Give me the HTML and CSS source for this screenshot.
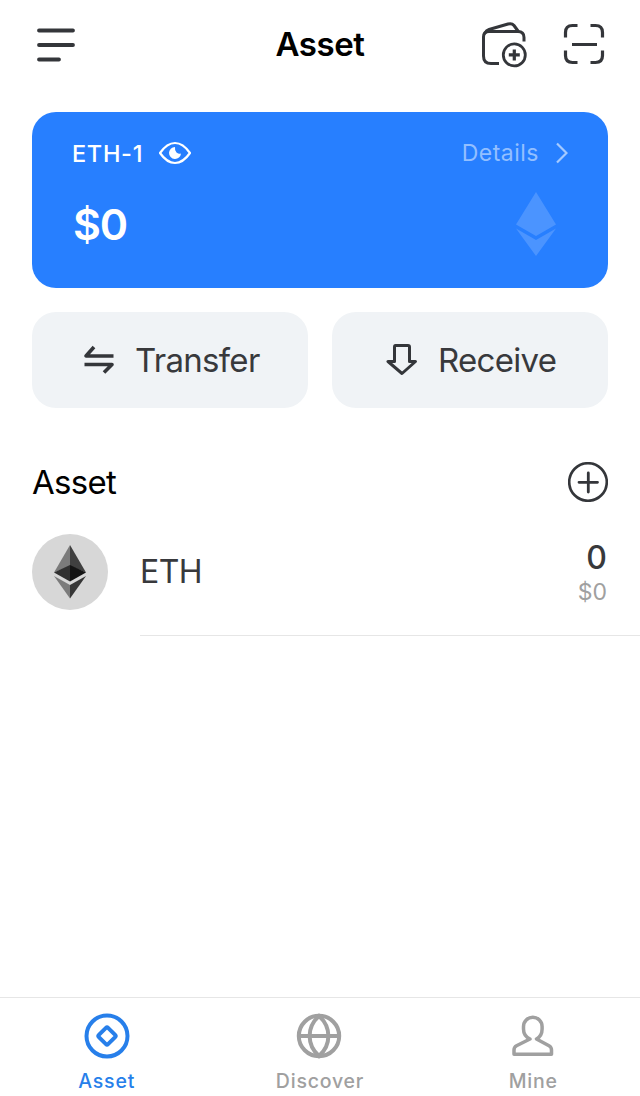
FILE: index.html
```
<!DOCTYPE html>
<html lang="en">
<head>
  <meta charset="UTF-8" />
  <meta name="viewport" content="width=device-width, initial-scale=1.0"/>
  <title>Asset</title>
  <link rel="stylesheet" href="styles.css">
</head>
<body>

  <header class="header">
    <svg class="icon menu-icon" width="40" height="40" viewBox="0 0 40 40">
      <path d="M3 5.500H37M3 20H37M3 34.500H23" stroke-width="3.800"/>
    </svg>
    <h1>Asset</h1>
    <div class="header-actions">
      <svg class="icon" width="48" height="48" viewBox="480 20 48 48">
        <path d="M499 63.500H491Q483.500 63.500 483.500 56V37Q483.500 31.500 489 31.500H518Q524 31.500 524 37.500V41.500" stroke-width="3" stroke-linecap="butt"/>
        <path d="M485 33Q486 30.500 489 29.500L508 24Q512 23 514 25.500L518 31" stroke-width="3"/>
        <circle cx="514.300" cy="54.900" r="11" stroke-width="2.800"/>
        <path d="M508.800 54.900H519.800M514.300 49.400V60.400" stroke-width="3.200" stroke-linecap="butt"/>
      </svg>
      <svg class="icon" width="48" height="48" viewBox="560 20 48 48">
        <path d="M565.500 37.500V32.500Q565.500 25.500 572.500 25.500H577.500M590.500 25.500H595.500Q602.500 25.500 602.500 32.500V37.500M602.500 50.500V55.500Q602.500 62.500 595.500 62.500H590.500M577.500 62.500H572.500Q565.500 62.500 565.500 55.500V50.500M572 44.500H597" stroke-width="3.200" stroke-linecap="butt"/>
      </svg>
    </div>
  </header>

  <main>
    <section class="card">
      <div class="card-top">
        <span class="wallet-name">ETH-1</span>
        <svg class="eye" width="34" height="26" viewBox="0 0 34 26">
          <path d="M2 13Q9 3 17 3T32 13Q25 23 17 23T2 13Z" fill="none" stroke="#fff" stroke-width="2.200" stroke-linejoin="round"/>
          <path d="M17 7A6 6 0 1 0 23 13.500Q21 14.500 18.500 12.500Q16.500 10 17 7Z" fill="#fff"/>
        </svg>
        <a class="details">Details
          <svg width="14" height="24" viewBox="0 0 14 24"><path d="M3 2.500L12.500 12L3 21.500"/></svg>
        </a>
      </div>
      <div class="card-bottom">
        <span class="balance">$0</span>
        <svg class="eth-mark" width="40" height="64" viewBox="0 0 40 64">
          <path d="M20 0L40 32.500L20 44L0 32.500ZM0 36.500L20 48L40 36.500L20 64Z"/>
        </svg>
      </div>
    </section>

    <div class="actions">
      <button class="action-btn">
        <svg class="icon" width="32" height="32" viewBox="0 0 32 32">
          <path d="M11 3L3 12H30.500M1.500 20.500H29L21 28.500" stroke-width="3.600" stroke-linecap="butt"/>
        </svg>
        <span>Transfer</span>
      </button>
      <button class="action-btn receive">
        <svg class="icon" width="32" height="32" viewBox="0 0 32 32">
          <path d="M9.500 1.500H22Q23.500 1.500 23.500 3V17.500H29.500L16 29.500L2 17.500H8.500V3Q8.500 1.500 9.500 1.500Z" stroke-width="3"/>
        </svg>
        <span>Receive</span>
      </button>
    </div>

    <div class="section-title">
      <h2>Asset</h2>
      <svg class="icon" width="40" height="40" viewBox="0 0 40 40">
        <circle cx="20" cy="20" r="18.800" stroke-width="2.600"/>
        <path d="M11 20.300H29.500M20.300 11V30" stroke-width="2.800"/>
      </svg>
    </div>

    <div class="asset-item">
      <svg width="76" height="76" viewBox="0 0 76 76">
        <circle cx="38" cy="38" r="38" fill="#d7d7d7"/>
        <path d="M38 11L22 38.500L38 32Z" fill="#7b7b7b"/>
        <path d="M38 11L54 38.500L38 32Z" fill="#404040"/>
        <path d="M38 31L22 38.500L38 47.500Z" fill="#303030"/>
        <path d="M38 31L54 38.500L38 47.500Z" fill="#141414"/>
        <path d="M22 42L38 51V64.500Z" fill="#7b7b7b"/>
        <path d="M54 42L38 51V64.500Z" fill="#363636"/>
      </svg>
      <div class="asset-info">
        <span class="asset-name">ETH</span>
        <div class="asset-value">
          <p class="amount">0</p>
          <p class="fiat">$0</p>
        </div>
      </div>
    </div>
  </main>

  <nav class="tabbar">
    <a class="tab active">
      <svg width="48" height="48" viewBox="0 0 48 48">
        <circle cx="24" cy="24" r="20.500"/>
        <rect x="17.500" y="17.500" width="13" height="13" rx="1.500" transform="rotate(45 24 24)"/>
      </svg>
      <span>Asset</span>
    </a>
    <a class="tab">
      <svg width="48" height="48" viewBox="1 0 48 48">
        <circle cx="24" cy="24" r="20.200"/>
        <path d="M4 24H44M24 4C11.500 15 11.500 33 24 44C36.500 33 36.500 15 24 4Z"/>
      </svg>
      <span>Discover</span>
    </a>
    <a class="tab">
      <svg width="48" height="48" viewBox="0 0 48 48">
        <path d="M21 27Q14.500 24 14.500 17V14.500A9.300 9.300 0 0 1 33.100 14.500V17Q33.100 24 27.500 27L40 33.800Q42.500 35.200 42.500 38V42.300H5V38Q5 35.200 7.500 33.800Z" stroke-width="3.500" stroke-linejoin="round"/>
      </svg>
      <span>Mine</span>
    </a>
  </nav>

</body>
</html>
```

FILE: styles.css
```
* {
  box-sizing: border-box;
  margin: 0;
  padding: 0;
}
body {
  font-family: Inter, "Liberation Sans", sans-serif;
  background: #fff;
  color: #38393c;
  min-height: 100vh;
  display: flex;
  flex-direction: column;
}
svg {
  display: block;
  flex-shrink: 0;
}
.icon {
  fill: none;
  stroke: #34363a;
  stroke-linecap: round;
  stroke-linejoin: round;
}

.header {
  height: 88px;
  padding: 0 32px;
  display: grid;
  grid-template-columns: 128px 1fr 128px;
  align-items: center;
}
.menu-icon {
  margin: 2px 0 0 4px;
}
.header h1 {
  text-align: center;
  font-size: 33px;
  font-weight: 600;
  letter-spacing: -0.4px;
  color: #000;
}
.header-actions {
  display: flex;
  gap: 32px;
}

main {
  flex: 1;
}
.card {
  height: 176px;
  margin: 24px 32px;
  padding: 26px 40px 0;
  border-radius: 24px;
  background: #277fff;
  color: #fff;
}
.card-top {
  display: flex;
  align-items: center;
  height: 30px;
}
.wallet-name {
  font-size: 23.5px;
  font-weight: 500;
  letter-spacing: 0.7px;
}
.eye {
  margin-left: 15px;
}
.details {
  display: flex;
  align-items: center;
  gap: 15px;
  margin-left: auto;
  font-size: 23px;
  letter-spacing: 0.5px;
  color: #93bfff;
}
.details svg {
  fill: none;
  stroke: #a5caff;
  stroke-width: 2.200;
}
.card-bottom {
  display: flex;
  align-items: center;
  justify-content: space-between;
  padding: 24px 12px 0 1px;
}
.balance {
  font-size: 43px;
  font-weight: 600;
  letter-spacing: -1.2px;
}
.eth-mark {
  fill: #4b94ff;
}

.actions {
  display: grid;
  grid-template-columns: 1fr 1fr;
  gap: 24px;
  padding: 0 32px;
}
.action-btn {
  height: 96px;
  display: flex;
  align-items: center;
  gap: 20px;
  padding-left: 51px;
  border: none;
  border-radius: 24px;
  background: #f0f3f6;
  color: #38393c;
  font-family: inherit;
  font-size: 33px;
  letter-spacing: -0.7px;
}
.receive {
  padding-left: 54px;
}

.section-title {
  display: flex;
  align-items: center;
  justify-content: space-between;
  padding: 54px 32px 0;
}
.section-title h2 {
  font-size: 33px;
  font-weight: 400;
  letter-spacing: -0.7px;
  color: #000;
}
.asset-item {
  display: flex;
  gap: 32px;
  padding: 32px 0 0 32px;
}
.asset-info {
  flex: 1;
  height: 102px;
  display: flex;
  justify-content: space-between;
  padding-right: 33px;
  border-bottom: 1px solid #e6e6e6;
}
.asset-name {
  font-size: 32px;
  line-height: 76px;
  letter-spacing: -0.6px;
}
.asset-value {
  padding-top: 4px;
  text-align: right;
}
.amount {
  font-size: 32px;
  font-weight: 500;
  line-height: 39px;
}
.fiat {
  font-size: 23px;
  line-height: 30px;
  color: #a0a0a0;
}

.tabbar {
  display: grid;
  grid-template-columns: repeat(3, 1fr);
  height: 99px;
  border-top: 1px solid #e6e6e6;
}
.tab {
  display: flex;
  flex-direction: column;
  align-items: center;
  padding-top: 14px;
  gap: 8px;
  font-size: 19.5px;
  font-weight: 450;
  line-height: 26px;
  letter-spacing: 0.8px;
  color: #a0a0a0;
}
.tab svg {
  fill: none;
  stroke: currentColor;
  stroke-width: 4;
}
.tab.active {
  color: #277fea;
}
```
